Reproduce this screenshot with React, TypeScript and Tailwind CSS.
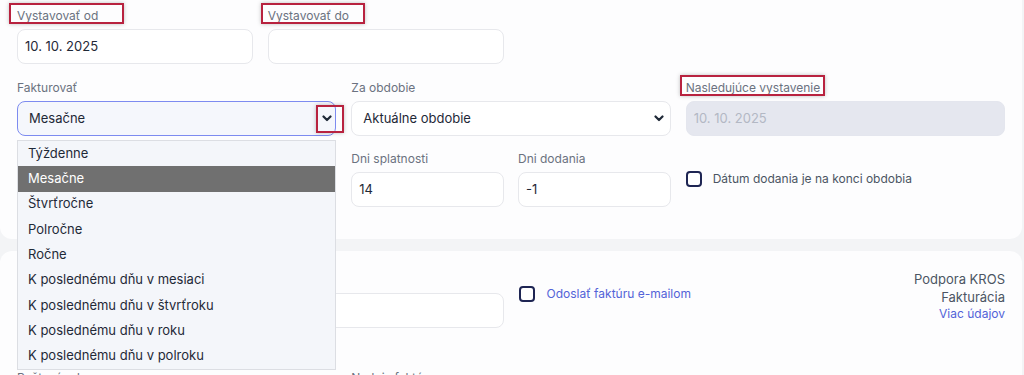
import React from 'react'

const frequencies = [
  'Týždenne',
  'Mesačne',
  'Štvrťročne',
  'Polročne',
  'Ročne',
  'K poslednému dňu v mesiaci',
  'K poslednému dňu v štvrťroku',
  'K poslednému dňu v roku',
  'K poslednému dňu v polroku',
]

function Chevron() {
  return (
    <svg width="10" height="7" viewBox="0 0 10 7" fill="none">
      <path d="M1.5 1.5 5 5l3.5-3.5" stroke="#1f2937" strokeWidth="2.2" strokeLinecap="round" strokeLinejoin="round" />
    </svg>
  )
}

// annotation frame drawn over labels / controls
function Mark({ className }: { className: string }) {
  return <span className={`pointer-events-none absolute border-2 border-[#b8223f] shadow-[0_0_4px_rgba(0,0,0,0.25)] ${className}`} />
}

function Label({ children }: { children: React.ReactNode }) {
  return <div className="mb-[5px] h-4 text-xs leading-4 text-[#6b7280]">{children}</div>
}

function Input({ value, disabled }: { value?: string; disabled?: boolean }) {
  return (
    <div
      className={`flex h-[35px] items-center rounded-lg border px-[7px] text-[13px] ${
        disabled ? 'border-[#e4e6ee] bg-[#e5e7ef] text-[#b3b8c4]' : 'border-[#e7e8ec] bg-white text-[#1f2937]'
      }`}
    >
      {value}
    </div>
  )
}

function Checkbox() {
  return <span className="h-[16px] w-[16px] shrink-0 rounded-[4px] border-2 border-[#1e2553] bg-white" />
}

export default function App() {
  return (
    <div className="h-[375px] overflow-hidden bg-[#f3f4f6] text-[#1f2937]" style={{ fontFamily: 'Inter, "Noto Sans", sans-serif' }}>
      <div className="relative z-20 mr-[2px] rounded-b-xl bg-[#fdfdfe] px-[17px] pb-[32px] pt-[8px]">
        <div className="grid grid-cols-4 gap-x-[15px]">
          <div>
            <div className="relative w-fit">
              <Label>Vystavovať od</Label>
              <Mark className="-left-[8px] -right-[26px] -top-[5px] bottom-0" />
            </div>
            <Input value="10. 10. 2025" />
          </div>
          <div>
            <div className="relative w-fit">
              <Label>Vystavovať do</Label>
              <Mark className="-left-[7px] -right-[16px] -top-[5px] bottom-0" />
            </div>
            <Input />
          </div>
        </div>

        <div className="mt-[16px] grid grid-cols-3 gap-x-[15px]">
          <div className="relative">
            <Label>Fakturovať</Label>
            <div className="flex h-[35px] items-center justify-between rounded-lg border border-[#7d8bf0] bg-[#f5f7fc] pl-[11px] pr-[1px] text-[13px]">
              <span>Mesačne</span>
              <span className="relative flex h-[28px] w-[14px] items-center justify-center">
                <Chevron />
                <Mark className="-left-[4px] -right-[10px] top-0 bottom-0" />
              </span>
            </div>
            <ul className="absolute left-0 right-0 top-full mt-[4px] border border-[#dcdee3] bg-[#f4f6fa] text-[13px]">
              {frequencies.map(f => (
                <li
                  key={f}
                  className={`flex h-[25.3px] items-center px-[10px] ${f === 'Mesačne' ? 'bg-[#707070] text-white' : 'text-[#1f2937]'}`}
                >
                  {f}
                </li>
              ))}
            </ul>
          </div>
          <div>
            <Label>Za obdobie</Label>
            <div className="flex h-[35px] items-center justify-between rounded-lg border border-[#e7e8ec] bg-white pl-[11px] pr-[6px] text-[13px]">
              <span>Aktuálne obdobie</span>
              <Chevron />
            </div>
          </div>
          <div>
            <div className="relative w-fit">
              <Label>Nasledujúce vystavenie</Label>
              <Mark className="-left-[6px] -right-[5px] -top-[5px] bottom-0" />
            </div>
            <Input value="10. 10. 2025" disabled />
          </div>
        </div>

        <div className="mt-[15px] grid grid-cols-3 gap-x-[15px]">
          <div />
          <div className="grid grid-cols-2 gap-x-[14px]">
            <div>
              <Label>Dni splatnosti</Label>
              <Input value="14" />
            </div>
            <div>
              <Label>Dni dodania</Label>
              <Input value="-1" />
            </div>
          </div>
          <div className="flex items-start gap-[11px] pt-[20px]">
            <Checkbox />
            <span className="text-xs leading-4 text-[#4b5563]">Dátum dodania je na konci obdobia</span>
          </div>
        </div>
      </div>

      <div className="mt-[12px] mr-[2px] rounded-xl bg-[#fdfdfe] px-[17px] pt-[19px]">
        <div className="grid grid-cols-4 gap-x-[15px]">
          <div className="col-span-2 pt-[23px]">
            <Input />
          </div>
          <div className="flex items-start gap-[12px] pt-[16px]">
            <Checkbox />
            <span className="text-xs leading-4 text-[#5363d8]">Odoslať faktúru e-mailom</span>
          </div>
          <div className="flex flex-col items-end text-[13px] leading-[18px]">
            <span className="text-[#4b5563]">Podpora KROS</span>
            <span className="text-[#4b5563]">Fakturácia</span>
            <span className="text-xs text-[#5363d8]">Viac údajov</span>
          </div>
        </div>
        <div className="mt-[42px] grid grid-cols-3 gap-x-[15px] pb-4">
          <Label>Poštová adresa</Label>
          <Label>Nadpis faktúry</Label>
        </div>
      </div>
    </div>
  )
}
